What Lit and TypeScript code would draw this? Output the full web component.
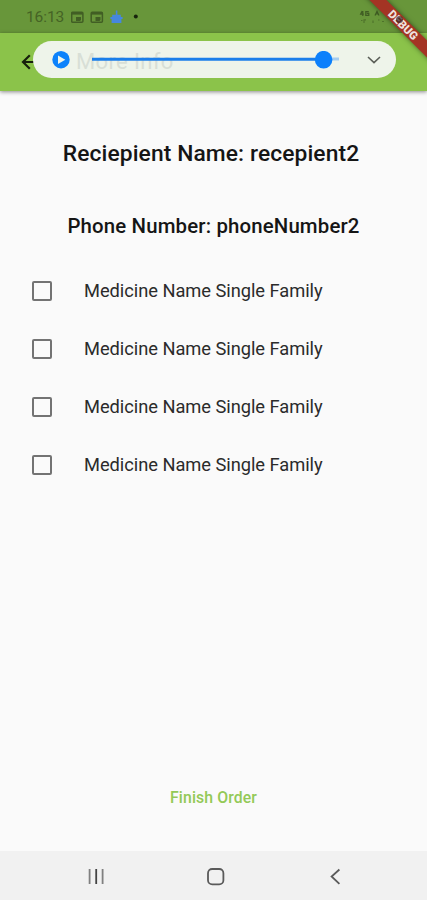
import { LitElement, html, css } from "lit";
import { customElement, property } from "lit/decorators.js";

@customElement("status-bar")
class StatusBar extends LitElement {
  static styles = css`
    :host { display: flex; height: 33px; background: #68963a; box-sizing: border-box; padding-left: 26px; align-items: center; color: #456325; }
    .time { font-size: 15.5px; line-height: 20px; letter-spacing: -0.1px; width: 45px; padding-top: 1px; }
    .icons { display: block; width: 72px; height: 33px; }
    .signal { display: block; width: 34px; height: 33px; margin-left: auto; margin-right: 36px; }
  `;
  render() {
    return html`
      <span class="time">16:13</span>
      <svg class="icons" viewBox="71 0 72 33">
        <g fill="none" stroke="#415e24" stroke-width="1.5">
          <rect x="71.7" y="12.2" width="11.2" height="10" rx="1" />
          <path d="M71.5 13.4h11.5" stroke-width="2.4" />
          <rect x="91.2" y="12.2" width="11.2" height="10" rx="1" />
          <path d="M91 13.4h11.5" stroke-width="2.4" />
        </g>
        <path d="M76 17h5v3l-1 1h-4zM95.5 17h5v3l-1 1h-4z" fill="#415e24" />
        <path d="M115.8 10.5h1.6v4.2h3.4v2.3h1.8v2h-1.2v4h-9.8v-4h-1.2v-2h1.8v-2.3h3.6z" fill="#4687df" />
        <circle cx="135.8" cy="16.4" r="2" fill="#17240c" />
      </svg>
      <svg class="signal" viewBox="357 0 34 33">
        <g fill="none" stroke="#3f5c23" stroke-width="1.2">
          <path d="M362.2 11l-1.6 3.2h3.2M362.8 11v5M368.8 11.6h-3v3.8h3v-2h-2M375 15.4l2-4 2 4M375.5 14h3" />
          <path d="M361 20.5h1.5M364 23v-3.2h2M373 20.5v2.5M378 20h1.5M382 21.5h2" opacity=".6" />
        </g>
      </svg>
    `;
  }
}

@customElement("media-overlay")
class MediaOverlay extends LitElement {
  static styles = css`
    :host { display: flex; align-items: center; box-sizing: border-box; width: 363px; height: 37px; border-radius: 19px; background: #eef4ea; padding: 0 14px 0 19px; }
    .play { width: 18px; height: 18px; flex: none; }
    .title { position: absolute; left: 43px; top: 8px; font-size: 22px; line-height: 26px; color: #d8dfd6; white-space: nowrap; letter-spacing: 0.35px; }
    .track { position: relative; width: 249px; height: 18px; margin-left: 21px; flex: none; }
    .chevron { width: 16px; height: 12px; margin-left: 26px; flex: none; }
  `;
  render() {
    return html`
      <svg class="play" viewBox="0 0 18 18"><circle cx="9" cy="8.7" r="8.7" fill="#0c82fb" /><path d="M6 4.4v8.6L13.3 8.7z" fill="#eef4ea" /></svg>
      <span class="title">More Info</span>
      <svg class="track" viewBox="0 0 249 18">
        <path d="M238 8h10" stroke="#a3ccf0" stroke-width="3" />
        <path d="M1 8.2h231" stroke="#1a7eea" stroke-width="3" />
        <circle cx="232.6" cy="8.7" r="8.8" fill="#0c80fb" />
      </svg>
      <svg class="chevron" viewBox="0 0 16 12"><path d="M2 3l6 5.6L14 3" fill="none" stroke="#5a5e57" stroke-width="1.6" /></svg>
    `;
  }
}

@customElement("medicine-row")
class MedicineRow extends LitElement {
  @property() label = "";
  static styles = css`
    :host { display: flex; align-items: center; height: 58px; padding-left: 32px; }
    .box { box-sizing: border-box; width: 20px; height: 20px; border: 2px solid #737373; border-radius: 2px; margin-right: 32px; }
    .label { font-size: 18.3px; letter-spacing: -0.04px; line-height: 22px; padding-bottom: 1px; color: #2b2b2b; white-space: nowrap; }
  `;
  render() {
    return html`<span class="box"></span><span class="label">${this.label}</span>`;
  }
}

@customElement("app-root")
class AppRoot extends LitElement {
  static styles = css`
    :host { display: flex; flex-direction: column; position: relative; width: 427px; height: 900px; overflow: hidden; background: #fafafa; font-family: Roboto, "Liberation Sans", sans-serif; }
    .bar { position: relative; display: flex; align-items: center; flex: none; height: 58px; box-sizing: border-box; padding-left: 20px; background: #8bc34a; box-shadow: 0 1px 4px rgba(0, 0, 0, 0.45); }
    .back { width: 16px; height: 16px; }
    .overlay { position: absolute; left: 33px; top: 8px; }
    .heading { text-align: center; font-weight: 500; color: #151515; white-space: nowrap; }
    .name { font-size: 22.8px; letter-spacing: 0.1px; line-height: 28px; margin-top: 49px; padding-right: 5px; }
    .phone { font-size: 20.4px; letter-spacing: 0.15px; line-height: 26px; margin-top: 45px; }
    .list { margin-top: 23px; }
    .finish { margin-top: auto; text-align: center; font-size: 15.8px; letter-spacing: 0.1px; font-weight: 500; line-height: 20px; color: #93c957; margin-bottom: 43px; }
    .nav { display: flex; height: 49px; background: #f1f1f1; flex: none; }
    .nav svg { width: 427px; height: 49px; }
    .ribbon { position: absolute; left: 343px; top: 19px; width: 120px; height: 12px; transform: rotate(45deg); background: #a43424; box-shadow: 0 0 5px rgba(0, 0, 0, 0.5); color: #eee3df; font-size: 11.5px; line-height: 12.5px; font-weight: 900; text-align: center; z-index: 5; }
    .touch { position: absolute; left: 396px; top: 16px; width: 7px; height: 7px; border-radius: 4px; background: rgba(55, 35, 40, 0.7); z-index: 6; }
  `;
  render() {
    const medicines = Array.from({ length: 4 }, () => "Medicine Name Single Family");
    return html`
      <status-bar></status-bar>
      <header class="bar">
        <svg class="back" viewBox="0 0 16 16"><path d="M9.8 1.2L3 8l6.8 6.8M3 8h13" fill="none" stroke="#17200c" stroke-width="2.2" /></svg>
        <media-overlay class="overlay"></media-overlay>
      </header>
      <div class="heading name">Reciepient Name: recepient2</div>
      <div class="heading phone">Phone Number: phoneNumber2</div>
      <div class="list">${medicines.map((m) => html`<medicine-row .label=${m}></medicine-row>`)}</div>
      <div class="finish">Finish Order</div>
      <nav class="nav">
        <svg viewBox="0 0 427 49">
          <g fill="none" stroke="#5a5a5a" stroke-width="1.8">
            <path d="M89.6 18v15M102.6 18v15" stroke="#808080" />
            <path d="M96.2 18v15" stroke="#444" />
            <rect x="208" y="18" width="15.4" height="15.4" rx="4.2" />
            <path d="M339.4 18.5L331.6 25.5L339.4 32.8" />
          </g>
        </svg>
      </nav>
      <div class="ribbon">DEBUG</div>
      <span class="touch"></span>
    `;
  }
}
